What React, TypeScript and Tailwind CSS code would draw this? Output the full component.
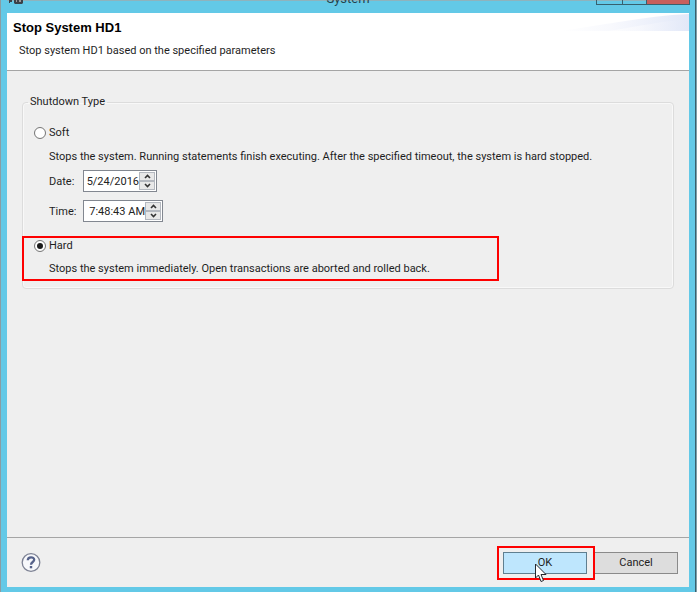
import { useState } from 'react'

type ShutdownType = 'soft' | 'hard'

function Chevron({ down = false }: { down?: boolean }) {
  return (
    <svg className="h-[5px] w-[7px]" viewBox="0 0 7 5" fill="none" stroke="#333333" strokeWidth={1.6}>
      <path d={down ? 'M1 1l2.500 2.500L6 1' : 'M1 4l2.500-2.500L6 4'} />
    </svg>
  )
}

interface SpinnerProps {
  id: string
  label: string
  value: string
  width: string
}

function SpinnerField({ id, label, value, width }: SpinnerProps) {
  const [text, setText] = useState(value)

  return (
    <div className="ml-[26px] flex items-center">
      <label htmlFor={id} className="w-[34px] pt-px">
        {label}
      </label>
      <div className={`flex h-[22px] border border-[#828790] bg-white p-px ${width}`}>
        <input
          id={id}
          className="min-w-0 flex-1 pt-px text-right text-[#222222] outline-none"
          value={text}
          onChange={(e) => setText(e.target.value)}
        />
        <div className="flex w-4 shrink-0 flex-col">
          <button
            type="button"
            aria-label={`Increase ${id}`}
            className="flex flex-1 items-center justify-center border border-[#b4b8bf] bg-[#e8e8e8]"
          >
            <Chevron />
          </button>
          <button
            type="button"
            aria-label={`Decrease ${id}`}
            className="flex flex-1 items-center justify-center border border-[#b4b8bf] bg-[#e8e8e8]"
          >
            <Chevron down />
          </button>
        </div>
      </div>
    </div>
  )
}

interface OptionProps {
  label: string
  checked: boolean
  onSelect: () => void
}

function RadioOption({ label, checked, onSelect }: OptionProps) {
  return (
    <label className="flex w-fit items-center gap-1">
      <input
        type="radio"
        name="shutdown"
        checked={checked}
        onChange={onSelect}
        className="h-[10px] w-[10px] appearance-none rounded-full bg-white outline outline-[#777777] checked:border-2 checked:border-white checked:bg-[#1a1a1a]"
      />
      {label}
    </label>
  )
}

function TitleBar() {
  return (
    <div className="relative flex h-[13px] shrink-0 items-end justify-center border-t border-[#8fb3bd] pb-1">
      <svg className="absolute left-[1px] -top-px h-1 w-4" viewBox="0 0 16 4">
        <path d="M1 0h3v2H2v1H1z" fill="#3b4148" />
        <path d="M6 0h9v3l-1 1H7L6 3z" fill="#3b4148" />
        <path d="M8 0h1v2H8zM11 0h2v2h-2z" fill="#9a9699" />
      </svg>
      <span className="text-[13px] leading-5 text-[#26424c]">System</span>
      <div className="absolute -right-px -top-px flex h-[5px] border-x border-b border-[#38606e]">
        <button type="button" aria-label="Minimize" className="w-[26px] border-r border-[#38606e]" />
        <button type="button" aria-label="Maximize" className="w-6 border-r border-[#38606e]" />
        <button type="button" aria-label="Close" className="w-[42px] bg-[#c75f5c]" />
      </div>
    </div>
  )
}

function HeaderSwoosh() {
  return (
    <svg className="absolute right-0 top-0 h-[18px] w-[130px]" viewBox="0 0 130 18">
      <defs>
        <linearGradient id="swoosh" x1="0" x2="1">
          <stop offset="0" stopColor="#ffffff" />
          <stop offset="0.400" stopColor="#f8f9fd" />
          <stop offset="1" stopColor="#e2e8f8" />
        </linearGradient>
      </defs>
      <path d="M0 18C40 13 85 3 130 1v17z" fill="url(#swoosh)" />
      <path d="M50 18C80 13 105 8 130 6v12z" fill="url(#swoosh)" opacity="0.7" />
    </svg>
  )
}

export default function App() {
  const [type, setType] = useState<ShutdownType>('hard')

  return (
    <div className="flex min-h-screen bg-[#7fa0aa] pr-px font-[Roboto,sans-serif] text-[11px] leading-4 text-[#1e1e1e]">
      <div className="flex flex-1 flex-col border-x border-l-[#8a9da3] border-r-[#38606e] bg-[#63c9e7] px-[6px] pb-[5px]">
        <TitleBar />

        <header className="relative h-[57px] shrink-0 bg-white px-[6px] pt-[7px]">
          <HeaderSwoosh />
          <h1 className="relative font-['Liberation_Sans',sans-serif] text-[13px] font-bold leading-4 text-black">
            Stop System HD1
          </h1>
          <p className="relative mt-[7px] pl-[6px]">Stop system HD1 based on the specified parameters</p>
        </header>

        <main className="flex-1 border-y border-[#a5a5a5] bg-[#efefef] px-[15px] pt-[23px]">
          <fieldset className="rounded-sm border border-[#dcdcdc] pb-[11px] shadow-[inset_0_0_0_1px_#f8f8f8]">
            <legend className="ml-[5px] px-[2px]">Shutdown Type</legend>
            <div className="px-3 pt-[15px]">
              <RadioOption label="Soft" checked={type === 'soft'} onSelect={() => setType('soft')} />
              <p className="mb-[5px] ml-[14px] mt-2">
                Stops the system. Running statements finish executing. After the specified timeout, the system is hard
                stopped.
              </p>
            </div>
            <div className="space-y-2">
              <SpinnerField id="date" label="Date:" value="5/24/2016" width="w-[74px]" />
              <SpinnerField id="time" label="Time:" value="7:48:43 AM" width="w-[80px]" />
            </div>
            <div className="relative px-3 pt-4">
              <div className="pointer-events-none absolute -left-px top-[14px] h-[45px] w-[477px] border-2 border-[#fe0000]" />
              <RadioOption label="Hard" checked={type === 'hard'} onSelect={() => setType('hard')} />
              <p className="ml-[14px] mt-[7px]">
                Stops the system immediately. Open transactions are aborted and rolled back.
              </p>
            </div>
          </fieldset>
        </main>

        <footer className="flex h-[49px] shrink-0 items-center justify-between bg-[#efefef] pl-[14px] pr-[11px]">
          <button type="button" aria-label="Help">
            <svg className="h-5 w-5" viewBox="0 0 20 20" fill="none">
              <circle cx="10" cy="9.500" r="8.800" fill="#f7f8fb" stroke="#7d8294" strokeWidth="1.300" />
              <path
                d="M6.800 7.300C6.800 3.400 13.200 3.400 13.200 6.800C13.200 9 10 9 10 11.700"
                stroke="#56628a"
                strokeWidth="2.300"
              />
              <path d="M8.800 13h2.400v2.300H8.800z" fill="#56628a" />
            </svg>
          </button>
          <div className="flex gap-[7px]">
            <div className="relative">
              <button type="button" className="h-[22px] w-[84px] border border-[#5f7f90] bg-[#bee6fd]">
                OK
              </button>
              <div className="pointer-events-none absolute -left-[6px] -top-[6px] h-[34px] w-[98px] border-2 border-[#fe0000]" />
              <svg className="pointer-events-none absolute left-8 top-[11px] h-5 w-3" viewBox="0 0 12 20">
                <path
                  d="M.5 1v14l3-3 2.500 6.500 2.500-1L6 11.500h5z"
                  fill="#ffffff"
                  stroke="#24282e"
                  strokeWidth="1"
                />
              </svg>
            </div>
            <button type="button" className="h-[22px] w-[84px] border border-[#8a8a8a] bg-[#dddddd]">
              Cancel
            </button>
          </div>
        </footer>
      </div>
    </div>
  )
}
